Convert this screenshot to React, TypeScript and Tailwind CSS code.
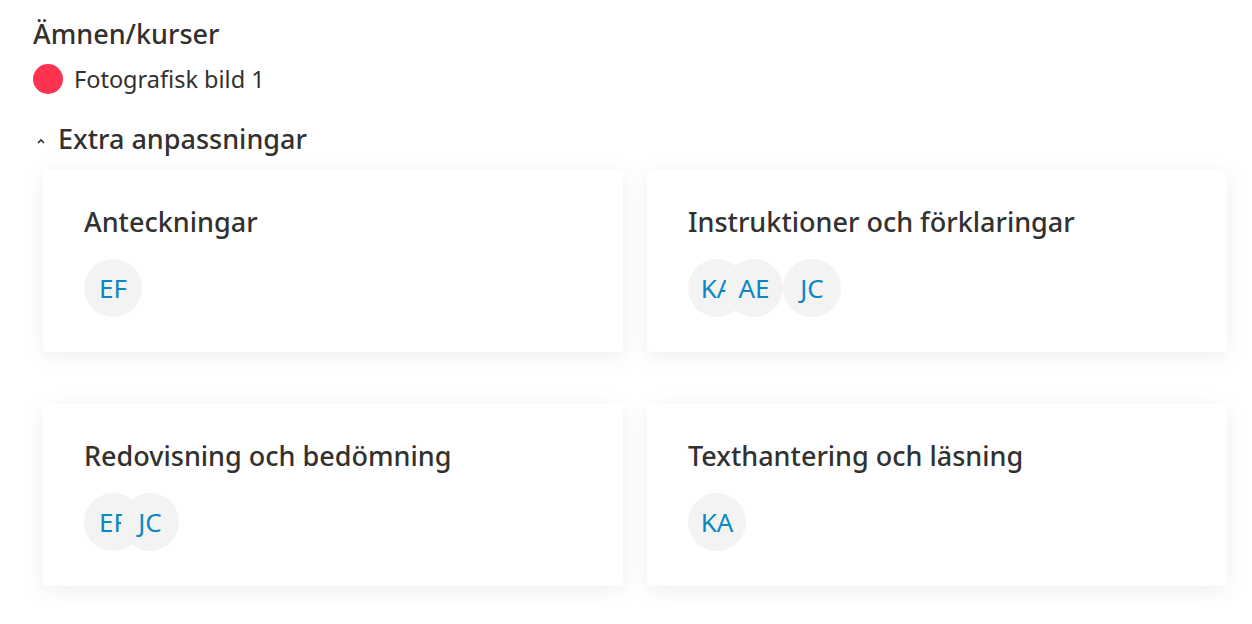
import React from "react";

type Av = { t: string; ml?: string };

const cards: { title: string; avatars: Av[] }[] = [
  { title: "Anteckningar", avatars: [{ t: "EF" }] },
  { title: "Instruktioner och förklaringar", avatars: [{ t: "KA" }, { t: "AE", ml: "-ml-[21px]" }, { t: "JC", ml: "ml-0" }] },
  { title: "Redovisning och bedömning", avatars: [{ t: "EF" }, { t: "JC", ml: "-ml-[21px]" }] },
  { title: "Texthantering och läsning", avatars: [{ t: "KA" }] },
];

function Avatar({ t, ml }: Av) {
  return (
    <div
      className={`relative w-[58px] h-[58px] rounded-full bg-[#f3f3f3] overflow-hidden flex items-center justify-center text-[26px] font-normal text-[#0b87c3] leading-none ${ml ?? ""}`}
    >
      <span className="whitespace-nowrap">{t}</span>
    </div>
  );
}

export default function App() {
  return (
    <div
      className="w-[1252px] h-[624px] bg-white text-[#323130] overflow-hidden"
      style={{ fontFamily: '"Noto Sans", "Open Sans", sans-serif' }}
    >
      <div className="pl-[33px] pr-[25px] pt-[17px]">
        <h2 className="text-[27px] font-medium leading-[34px]">Ämnen/kurser</h2>
        <div className="flex items-center gap-[11px] mt-[13px]">
          <div className="w-[30px] h-[30px] rounded-full bg-[#ff334f]" />
          <span className="text-[23.5px] leading-[30px]">Fotografisk bild 1</span>
        </div>
        <div className="flex items-center mt-[28px]">
          <svg width="10" height="8" viewBox="0 0 10 8" className="ml-[3px] mr-[12px] mt-[4px]">
            <path d="M2 6 L5 3 L8 6" fill="none" stroke="#323130" strokeWidth="1.6" />
          </svg>
          <span className="text-[27px] font-medium leading-[34px]">Extra anpassningar</span>
        </div>
        <div className="grid grid-cols-2 gap-x-[24px] gap-y-[52px] ml-[10px] mt-[14px]">
          {cards.map((c) => (
            <div
              key={c.title}
              className="h-[182px] bg-white rounded-[3px] shadow-[0_4px_22px_rgba(0,0,0,0.07)] pl-[41px] pt-[34px]"
            >
              <div className="text-[27px] font-medium leading-[36px]">{c.title}</div>
              <div className="flex mt-[19px]">
                {c.avatars.map((a, i) => (
                  <Avatar key={i} {...a} />
                ))}
              </div>
            </div>
          ))}
        </div>
      </div>
    </div>
  );
}
